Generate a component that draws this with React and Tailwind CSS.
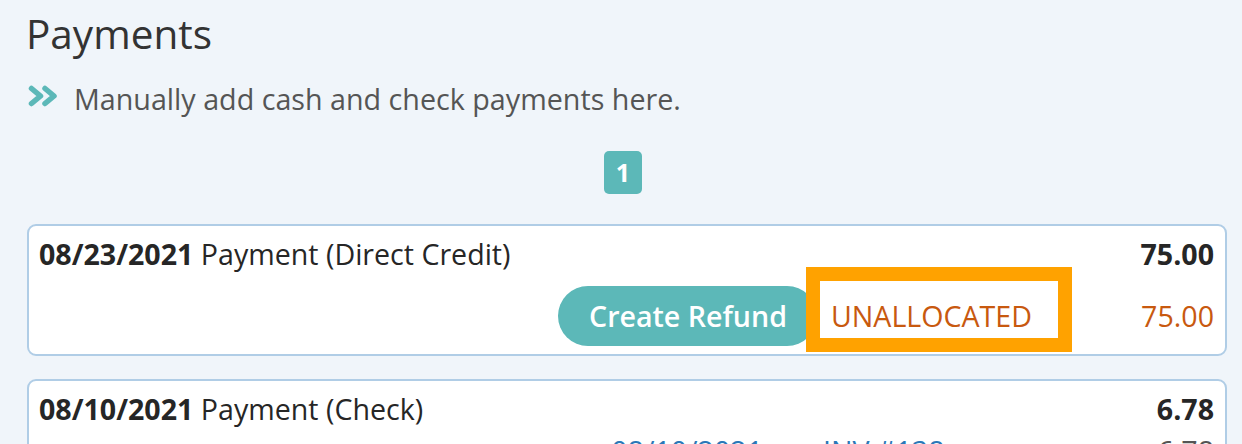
import React from "react";

function DoubleChevron() {
  return (
    <svg width="30" height="22" viewBox="0 0 30 22" className="shrink-0 mt-[6px]">
      <g fill="none" stroke="#5cb8b8" strokeWidth="5.5" strokeLinecap="round" strokeLinejoin="round">
        <path d="M3.5 3.5 L12.5 11 L3.5 18.5" />
        <path d="M17 3.5 L26 11 L17 18.5" />
      </g>
    </svg>
  );
}

export default function App() {
  return (
    <div
      className="w-[1242px] h-[444px] overflow-hidden bg-[#f0f5fa] pl-[27px] pr-[15px] pt-[10px]"
      style={{ fontFamily: '"Open Sans", "Noto Sans", sans-serif' }}
    >
      <h1 className="text-[40.5px] leading-[48px] font-normal text-[#333333] ml-[-1px]">Payments</h1>

      <div className="mt-[21px] flex items-start gap-[16px] ml-[1px]">
        <DoubleChevron />
        <p className="text-[28.7px] leading-[40px] text-[#555555]">Manually add cash and check payments here.</p>
      </div>

      <div className="mt-[32px] flex justify-center">
        <div className="mr-[8px] w-[38px] h-[43px] rounded-[5px] bg-[#5cb8b8] flex items-center justify-center text-white text-[25px] font-bold leading-none">
          1
        </div>
      </div>

      <div className="mt-[30px] relative rounded-[9px] border-2 border-[#b0cde6] bg-white pl-[10px] pr-[11px] pt-[12px] pb-[8px]">
        <div className="flex justify-between text-[28.6px] leading-[32px] text-[#262626]">
          <div>
            <span className="font-bold">08/23/2021</span> Payment (Direct Credit)
          </div>
          <div className="font-bold">75.00</div>
        </div>
        <div className="mt-[16px] flex items-center justify-end">
          <button className="h-[60px] rounded-full bg-[#5cb8b8] pl-[31px] pr-[30px] text-white text-[28.6px] font-semibold leading-none">
            Create Refund
          </button>
          <span className="ml-[14px] text-[28.6px] leading-[40px] text-[#c8590f]">UNALLOCATED</span>
          <span className="w-[182px] shrink-0 text-right text-[28.6px] leading-[40px] text-[#c8590f]">75.00</span>
        </div>
        <div className="absolute left-[777px] top-[41px] w-[266px] h-[85px] border-[14px] border-[#ffa200] pointer-events-none" />
      </div>

      <div className="mt-[23px] rounded-[9px] border-2 border-[#b0cde6] bg-white pl-[10px] pr-[11px] pt-[12px] pb-[8px]">
        <div className="flex justify-between text-[28.6px] leading-[32px] text-[#262626]">
          <div>
            <span className="font-bold">08/10/2021</span> Payment (Check)
          </div>
          <div className="font-bold">6.78</div>
        </div>
        <div className="mt-[6px] flex items-center justify-end text-[28.6px] leading-[40px]">
          <span className="text-[#2a78b8]">08/10/2021</span>
          <span className="ml-[60px] w-[209px] text-[#2a78b8]">INV #138</span>
          <span className="w-[182px] text-right text-[#555555]">6.78</span>
        </div>
        <div className="h-[40px]" />
      </div>
    </div>
  );
}
